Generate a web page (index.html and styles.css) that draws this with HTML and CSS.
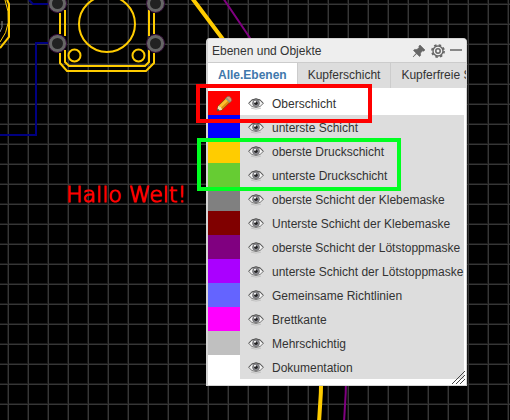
FILE: index.html
```html
<!DOCTYPE html>
<html lang="de">
<head>
    <meta charset="UTF-8">
    <meta name="viewport" content="width=device-width, initial-scale=1.0">
    <title>Ebenen und Objekte</title>
    <link rel="stylesheet" href="styles.css">
</head>
<body>
    <svg class="icon-defs" aria-hidden="true">
        <symbol id="icon-eye" viewBox="0 0 16 12">
            <path d="M.8 5.500Q3.500 1 8 1t7.200 4.500Q12.500 9.500 8 9.500T.8 5.500z" fill="#f4f4f4" stroke="#777" stroke-width="1"/>
            <path d="M.5 5.200Q3.500 .8 8 .8T15.500 5.200" fill="none" stroke="#555" stroke-width="1"/>
            <path d="M3 10.200Q8 12 13 10.200" fill="none" stroke="#bbb" stroke-width=".8"/>
            <circle cx="8" cy="5.200" r="3.400" fill="#8c8c94" stroke="#666" stroke-width=".8"/>
            <circle cx="8" cy="5.200" r="1.700" fill="#222"/>
            <circle cx="7" cy="3.800" r="1" fill="#fff"/>
        </symbol>
    </svg>

    <main class="board">
        <svg class="board-canvas" role="img" aria-label="Leiterplatte">
            <defs>
                <pattern id="grid" x="8" y="4" width="20" height="20" patternUnits="userSpaceOnUse">
                    <path d="M19.500 0V20M0 19.500H20" fill="none" stroke="#181818"/>
                    <path d="M.5 0V20M0 .5H20" fill="none" stroke="#363636"/>
                </pattern>
                <g id="pad">
                    <circle r="9" fill="#666" stroke="#38103c"/>
                    <circle r="5.500" fill="#222"/>
                </g>
            </defs>
            <rect width="100%" height="100%" fill="#000"/>
            <rect width="100%" height="100%" fill="url(#grid)"/>

            <g fill="none" stroke="#000080" stroke-width="2">
                <path d="M0 135H36V43H50"/>
                <path d="M29 0L33 4H50"/>
            </g>

            <g fill="none" stroke="#fc0" stroke-width="2">
                <path d="M7 0L9 4V37L0 48"/>
                <path d="M5 0Q14 24 0 42" stroke-width="1"/>
                <path d="M60 13V34M65 10V36M149 10V36M154 13V34"/>
                <path d="M60 53V63L67 71H146L154 63V53"/>
                <path d="M65 50V62L69 66H145L149 62V50"/>
                <circle cx="107" cy="24" r="28"/>
                <circle cx="74.500" cy="55.500" r="6"/>
                <circle cx="138.500" cy="55.500" r="6"/>
                <path d="M192 -2L222 38C290 130 332 270 319 422" stroke-width="4"/>
            </g>
            <path d="M2 21Q3 28 0 32" fill="none" stroke="#888"/>
            <path d="M223 -2L250 38C318 140 356 270 344 422" fill="none" stroke="#800080" stroke-width="2"/>

            <use href="#pad" x="57.500" y="3.500"/>
            <use href="#pad" x="155.500" y="3.500"/>
            <use href="#pad" x="57.500" y="43.500"/>
            <use href="#pad" x="155.500" y="43.500"/>

            <text class="board-text" x="66" y="202">Hallo Welt!</text>
        </svg>

        <section class="panel" aria-labelledby="panel-title">
            <header class="panel-header">
                <h2 id="panel-title">Ebenen und Objekte</h2>
                <button type="button" aria-label="Anheften">
                    <svg width="14" height="14" viewBox="0 0 14 14">
                        <path d="M8 1L13 6L11.500 7.200L10.700 6.800L8.500 9L8.600 11.500L7.500 12.500L4.700 9.700L1 13L4.200 9.200L1.500 6.500L2.500 5.400L5 5.500L7.200 3.300L6.800 2.300z" fill="#666" stroke="#666" stroke-width=".6" stroke-linejoin="round"/>
                    </svg>
                </button>
                <button type="button" aria-label="Einstellungen">
                    <svg width="14" height="14" viewBox="0 0 14 14" fill="none" stroke="#666">
                        <circle cx="7" cy="7" r="6.100" stroke-width="1.600" stroke-dasharray="2.500 2.291"/>
                        <circle cx="7" cy="7" r="5" stroke-width="1.400"/>
                        <circle cx="7" cy="7" r="2.200" stroke-width="1.500"/>
                    </svg>
                </button>
                <button type="button" aria-label="Minimieren">
                    <svg width="12" height="14" viewBox="0 0 12 14"><path d="M0 6H12" stroke="#888" stroke-width="2"/></svg>
                </button>
            </header>

            <nav class="tabs">
                <a class="tab active" href="#alle">Alle.Ebenen</a>
                <a class="tab" href="#kupfer">Kupferschicht</a>
                <a class="tab" href="#kupferfrei">Kupferfreie Schicht</a>
            </nav>

            <ul class="layers" id="alle">
                <li class="layer active">
                    <span class="swatch top">
                        <svg width="18" height="18" viewBox="0 0 18 18">
                            <path d="M2 16L3.300 10.800L11.500 2.600L15.600 6.700L7.200 14.800z" fill="#e08a10" stroke="#7a4c10" stroke-width=".8"/>
                            <path d="M4 10.800L11.400 3.400L13.400 5.400L6 12.800z" fill="#fcc02e"/>
                            <path d="M11 3.100L12.600 1.500Q14 .8 15.500 2.400T16.600 5.700L15.100 7.200z" fill="#d99878" stroke="#80644c" stroke-width=".7"/>
                            <path d="M10.400 3.700L11.600 2.500L15.700 6.600L14.500 7.800z" fill="#8f9a80"/>
                            <path d="M3.300 10.800L2 16L7.200 14.800L6 12.200z" fill="#f4dfb5"/>
                            <path d="M2.600 13.400L2 16L4.600 15.400z" fill="#333"/>
                        </svg>
                    </span>
                    <button type="button" class="eye" aria-label="Oberschicht anzeigen"><svg><use href="#icon-eye"/></svg></button>
                    <span class="name">Oberschicht</span>
                </li>
                <li class="layer">
                    <span class="swatch bottom"></span>
                    <button type="button" class="eye" aria-label="unterste Schicht anzeigen"><svg><use href="#icon-eye"/></svg></button>
                    <span class="name">unterste Schicht</span>
                </li>
                <li class="layer">
                    <span class="swatch top-silk"></span>
                    <button type="button" class="eye" aria-label="oberste Druckschicht anzeigen"><svg><use href="#icon-eye"/></svg></button>
                    <span class="name">oberste Druckschicht</span>
                </li>
                <li class="layer">
                    <span class="swatch bottom-silk"></span>
                    <button type="button" class="eye" aria-label="unterste Druckschicht anzeigen"><svg><use href="#icon-eye"/></svg></button>
                    <span class="name">unterste Druckschicht</span>
                </li>
                <li class="layer">
                    <span class="swatch top-paste"></span>
                    <button type="button" class="eye" aria-label="oberste Schicht der Klebemaske anzeigen"><svg><use href="#icon-eye"/></svg></button>
                    <span class="name">oberste Schicht der Klebemaske</span>
                </li>
                <li class="layer">
                    <span class="swatch bottom-paste"></span>
                    <button type="button" class="eye" aria-label="Unterste Schicht der Klebemaske anzeigen"><svg><use href="#icon-eye"/></svg></button>
                    <span class="name">Unterste Schicht der Klebemaske</span>
                </li>
                <li class="layer">
                    <span class="swatch top-solder"></span>
                    <button type="button" class="eye" aria-label="oberste Schicht der Lötstoppmaske anzeigen"><svg><use href="#icon-eye"/></svg></button>
                    <span class="name">oberste Schicht der Lötstoppmaske</span>
                </li>
                <li class="layer">
                    <span class="swatch bottom-solder"></span>
                    <button type="button" class="eye" aria-label="unterste Schicht der Lötstoppmaske anzeigen"><svg><use href="#icon-eye"/></svg></button>
                    <span class="name">unterste Schicht der Lötstoppmaske</span>
                </li>
                <li class="layer">
                    <span class="swatch ratlines"></span>
                    <button type="button" class="eye" aria-label="Gemeinsame Richtlinien anzeigen"><svg><use href="#icon-eye"/></svg></button>
                    <span class="name">Gemeinsame Richtlinien</span>
                </li>
                <li class="layer">
                    <span class="swatch outline"></span>
                    <button type="button" class="eye" aria-label="Brettkante anzeigen"><svg><use href="#icon-eye"/></svg></button>
                    <span class="name">Brettkante</span>
                </li>
                <li class="layer">
                    <span class="swatch multi"></span>
                    <button type="button" class="eye" aria-label="Mehrschichtig anzeigen"><svg><use href="#icon-eye"/></svg></button>
                    <span class="name">Mehrschichtig</span>
                </li>
                <li class="layer">
                    <span class="swatch document"></span>
                    <button type="button" class="eye" aria-label="Dokumentation anzeigen"><svg><use href="#icon-eye"/></svg></button>
                    <span class="name">Dokumentation</span>
                </li>
            </ul>

            <svg class="resize" width="14" height="14" viewBox="0 0 14 14" aria-hidden="true">
                <path d="M0 13L13 0M4 13L13 4M8 13L13 8" stroke="#444" stroke-width="1"/>
            </svg>
        </section>

        <div class="marker marker-red"></div>
        <div class="marker marker-green"></div>
    </main>
</body>
</html>
```
FILE: styles.css
```css
* {
    margin: 0;
    padding: 0;
    box-sizing: border-box;
}

body {
    background-color: #000;
    color: #333;
    font-family: "Liberation Sans", Arial, sans-serif;
    font-size: 12px;
}

button {
    background: none;
    border: none;
    cursor: pointer;
}

svg {
    display: block;
}

.icon-defs {
    display: none;
}

.board {
    position: relative;
    height: 100vh;
    overflow: hidden;
}

.board-canvas {
    width: 100%;
    height: 100%;
}

.board-text {
    fill: #f00;
    stroke: #f00;
    stroke-width: 1px;
    font-family: "DejaVu Sans", sans-serif;
    font-size: 22px;
    font-weight: 200;
}

/* floating window */
.panel {
    position: absolute;
    left: 206px;
    top: 38px;
    width: 261px;
    padding-bottom: 6px;
    background-color: #fff;
    border: 1px solid #d4d4d4;
    border-left-width: 2px;
    border-radius: 4px 4px 0 0;
    overflow: hidden;
}

.panel-header {
    display: flex;
    align-items: center;
    gap: 5px;
    height: 23px;
    padding: 0 4px;
    background-color: #eee;
}

.panel-header h2 {
    flex: 1;
    font-size: 12px;
    font-weight: normal;
}

.tabs {
    display: flex;
    height: 26px;
    background-color: #ddd;
    border-top: 1px solid #ccc;
    overflow: hidden;
}

.tab {
    padding: 0 10px;
    border-right: 1px solid #ccc;
    color: #333;
    line-height: 25px;
    text-decoration: none;
    white-space: nowrap;
}

.tab.active {
    background-color: #fff;
    color: #4078ac;
    font-weight: bold;
}

.layers {
    padding: 3px 2px 0 0;
    list-style: none;
}

.layer {
    display: grid;
    grid-template-columns: 32px 32px 1fr;
    height: 24px;
    background-color: #ddd;
}

.layer.active {
    background-color: #fff;
}

.swatch {
    display: flex;
    align-items: center;
    justify-content: center;
}

.eye {
    display: flex;
    align-items: center;
    justify-content: center;
}

.eye svg {
    width: 16px;
    height: 12px;
}

.name {
    line-height: 26px;
    white-space: nowrap;
}

.top { background-color: #f00; }
.bottom { background-color: #00f; }
.top-silk { background-color: #fc0; }
.bottom-silk { background-color: #6c3; }
.top-paste { background-color: #808080; }
.bottom-paste { background-color: #800000; }
.top-solder { background-color: #800080; }
.bottom-solder { background-color: #a0f; }
.ratlines { background-color: #6464ff; }
.outline { background-color: #f0f; }
.multi { background-color: #c0c0c0; }
.document { background-color: #fff; }

.resize {
    position: absolute;
    right: 0;
    bottom: 0;
}

/* highlight frames over the panel */
.marker {
    position: absolute;
    border: 4px solid;
    pointer-events: none;
}

.marker-red {
    left: 196px;
    top: 84px;
    width: 176px;
    height: 39px;
    border-color: #f00;
}

.marker-green {
    left: 197px;
    top: 138px;
    width: 204px;
    height: 53px;
    border-color: #00ff21;
}
```
